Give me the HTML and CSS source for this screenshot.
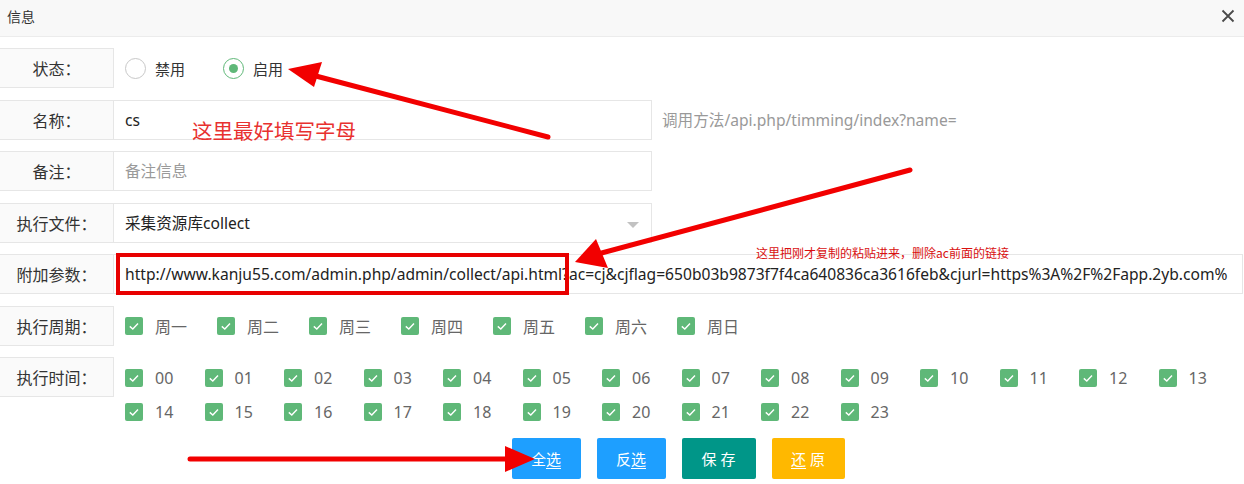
FILE: index.html
```html
<!DOCTYPE html>
<html lang="zh">
<head>
<meta charset="utf-8">
<title>信息</title>
<link rel="stylesheet" href="styles.css">
</head>
<body>
<div class="dialog">
  <div class="header">
    <span class="title">信息</span>
    <svg class="close" width="14" height="14" viewBox="0 0 14 14"><path d="M1.5 1.5 L12.5 12.5 M12.5 1.5 L1.5 12.5" stroke="#4a4a4a" stroke-width="1.8" fill="none"/></svg>
  </div>
  <div class="form">
    <div class="row">
      <div class="label">状态：</div>
      <div class="radios">
        <div class="radio"><span class="circle"></span><span class="rtext">禁用</span></div>
        <div class="radio on"><span class="circle"><span class="dot"></span></span><span class="rtext">启用</span></div>
      </div>
    </div>
    <div class="row">
      <div class="label">名称：</div>
      <div class="input">cs</div>
      <div class="hint">调用方法/api.php/timming/index?name=</div>
    </div>
    <div class="row">
      <div class="label">备注：</div>
      <div class="input placeholder">备注信息</div>
    </div>
    <div class="row">
      <div class="label">执行文件：</div>
      <div class="input select">采集资源库collect<span class="caret"></span></div>
    </div>
    <div class="row">
      <div class="label">附加参数：</div>
      <div class="input wide">http://www.kanju55.com/admin.php/admin/collect/api.html?ac=cj&amp;cjflag=650b03b9873f7f4ca640836ca3616feb&amp;cjurl=https%3A%2F%2Fapp.2yb.com%</div>
    </div>
    <div class="row">
      <div class="label">执行周期：</div>
      <div class="checks week">
        <div class="cb"><span class="box"><svg width="18" height="18" viewBox="0 0 18 18"><path d="M4.8 9.4 L7.8 12 L13 6.6" stroke="#fff" stroke-width="1.4" fill="none"/></svg></span>周一</div>
        <div class="cb"><span class="box"><svg width="18" height="18" viewBox="0 0 18 18"><path d="M4.8 9.4 L7.8 12 L13 6.6" stroke="#fff" stroke-width="1.4" fill="none"/></svg></span>周二</div>
        <div class="cb"><span class="box"><svg width="18" height="18" viewBox="0 0 18 18"><path d="M4.8 9.4 L7.8 12 L13 6.6" stroke="#fff" stroke-width="1.4" fill="none"/></svg></span>周三</div>
        <div class="cb"><span class="box"><svg width="18" height="18" viewBox="0 0 18 18"><path d="M4.8 9.4 L7.8 12 L13 6.6" stroke="#fff" stroke-width="1.4" fill="none"/></svg></span>周四</div>
        <div class="cb"><span class="box"><svg width="18" height="18" viewBox="0 0 18 18"><path d="M4.8 9.4 L7.8 12 L13 6.6" stroke="#fff" stroke-width="1.4" fill="none"/></svg></span>周五</div>
        <div class="cb"><span class="box"><svg width="18" height="18" viewBox="0 0 18 18"><path d="M4.8 9.4 L7.8 12 L13 6.6" stroke="#fff" stroke-width="1.4" fill="none"/></svg></span>周六</div>
        <div class="cb"><span class="box"><svg width="18" height="18" viewBox="0 0 18 18"><path d="M4.8 9.4 L7.8 12 L13 6.6" stroke="#fff" stroke-width="1.4" fill="none"/></svg></span>周日</div>
      </div>
    </div>
    <div class="row">
      <div class="label">执行时间：</div>
      <div class="checks hours" id="hours"></div>
    </div>
    <div class="buttons">
      <button class="btn blue">全<u>选</u></button>
      <button class="btn blue">反<u>选</u></button>
      <button class="btn teal">保 存</button>
      <button class="btn gold"><u>还</u> 原</button>
    </div>
  </div>
</div>

<div class="mark-box"></div>
<div class="note big">这里最好填写字母</div>
<div class="note small">这里把刚才复制的粘贴进来，删除ac前面的链接</div>
<svg class="arrows" width="1244" height="484" viewBox="0 0 1244 484">
  <g stroke="#f20000" stroke-width="5" stroke-linecap="round" fill="none">
    <line x1="548" y1="137" x2="312" y2="75"/>
    <line x1="910" y1="170" x2="598" y2="254"/>
    <line x1="190" y1="459" x2="510" y2="459"/>
  </g>
  <g fill="#f20000">
    <polygon points="288,69 322,62 314,87"/>
    <polygon points="575,262 596,239 608,268"/>
    <polygon points="535,459 505,446 505,472"/>
  </g>
</svg>
<script src="app.js"></script>
</body>
</html>
```

FILE: app.js
```js
(function () {
  var wrap = document.getElementById('hours');
  var html = '';
  for (var i = 0; i < 24; i++) {
    var n = i < 10 ? '0' + i : '' + i;
    html += '<div class="cb"><span class="box"><svg width="18" height="18" viewBox="0 0 18 18"><path d="M4.8 9.4 L7.8 12 L13 6.6" stroke="#fff" stroke-width="1.4" fill="none"/></svg></span>' + n + '</div>';
  }
  wrap.innerHTML = html;
})();
```

FILE: styles.css
```css
html, body {
  margin: 0;
  padding: 0;
  background: #fff;
  width: 1244px;
  height: 484px;
  overflow: hidden;
  position: relative;
  font-family: "Noto Sans", "Noto Sans CJK SC", sans-serif;
  color: #333;
}

.dialog {
  width: 1244px;
}

.header {
  height: 37px;
  background: #f8f8f8;
  border-bottom: 1px solid #ececec;
  display: flex;
  align-items: center;
  justify-content: space-between;
  padding: 0 9px 5px 7px;
  box-sizing: border-box;
}

.title {
  font-size: 14px;
  color: #333;
}

.close {
  display: block;
}

.form {
  padding-top: 11px;
}

.row {
  display: flex;
  align-items: flex-start;
  margin-bottom: 11.5px;
}

.label {
  width: 115px;
  height: 40px;
  margin-left: -1px;
  box-sizing: border-box;
  border: 1px solid #e6e6e6;
  background: #fafafa;
  font-family: "Noto Sans CJK SC", sans-serif;
  font-size: 16px;
  line-height: 38px;
  text-align: center;
  color: #333;
  flex: none;
}

.radios {
  display: flex;
  align-items: center;
  height: 40px;
  padding-left: 11px;
}

.radio {
  display: flex;
  align-items: center;
  width: 98px;
  font-size: 15px;
  color: #333;
}

.circle {
  width: 21px;
  height: 21px;
  box-sizing: border-box;
  border: 1.5px solid #c8c8c8;
  border-radius: 50%;
  display: flex;
  align-items: center;
  justify-content: center;
  margin-right: 9px;
  flex: none;
}

.radio.on .circle {
  border-color: #5fb878;
}

.dot {
  width: 9px;
  height: 9px;
  border-radius: 50%;
  background: #5fb878;
}

.input {
  width: 539px;
  height: 40px;
  margin-left: -1px;
  box-sizing: border-box;
  border: 1px solid #e6e6e6;
  background: #fff;
  padding-left: 11px;
  font-size: 15.6px;
  line-height: 38px;
  color: #222;
  white-space: nowrap;
  overflow: hidden;
  position: relative;
  flex: none;
}

.input.placeholder {
  color: #9a9a9a;
}

.input.wide {
  width: 1130px;
  color: #222;
}

.caret {
  position: absolute;
  right: 12px;
  top: 18px;
  width: 0;
  height: 0;
  border-left: 6px solid transparent;
  border-right: 6px solid transparent;
  border-top: 6px solid #c2c2c2;
}

.hint {
  font-size: 15.6px;
  color: #999;
  line-height: 40px;
  padding-left: 10px;
}

.checks {
  display: grid;
  padding-left: 11px;
}

.checks.week {
  grid-template-columns: repeat(7, 92px);
  grid-auto-rows: 40px;
}

.checks.hours {
  grid-template-columns: repeat(14, 79.5px);
  grid-auto-rows: 34px;
  padding-top: 4px;
}

.cb {
  display: flex;
  align-items: center;
  font-size: 16px;
  color: #666;
  white-space: nowrap;
}

.box {
  width: 18px;
  height: 18px;
  background: #5fb878;
  border-radius: 2px;
  margin-right: 12px;
  flex: none;
  display: block;
}

.box svg {
  display: block;
}

.buttons {
  display: flex;
  justify-content: center;
  gap: 16px;
  padding-left: 112px;
  margin-top: -3px;
}

.btn {
  height: 41px;
  padding: 0 19px;
  border: none;
  border-radius: 2px;
  font-family: "Noto Sans", "Noto Sans CJK SC", sans-serif;
  font-size: 15px;
  color: #fff;
  white-space: pre;
}

.btn u {
  text-underline-offset: 3px;
}

.btn.blue { background: #1e9fff; width: 69px; }
.btn.teal { background: #009688; width: 74px; }
.btn.gold { background: #ffb800; width: 73px; }

.mark-box {
  position: absolute;
  left: 116px;
  top: 253px;
  width: 453px;
  height: 42px;
  box-sizing: border-box;
  border: 4px solid #e80000;
}

.note {
  position: absolute;
  color: #e8312f;
  font-family: "Noto Sans CJK SC", sans-serif;
  white-space: nowrap;
}

.note.big {
  left: 192px;
  top: 116px;
  font-size: 20.5px;
  line-height: 28px;
}

.note.small {
  left: 756px;
  top: 245px;
  font-size: 12px;
  line-height: 16px;
  color: #d91010;
}

.arrows {
  position: absolute;
  left: 0;
  top: 0;
  pointer-events: none;
}
```
